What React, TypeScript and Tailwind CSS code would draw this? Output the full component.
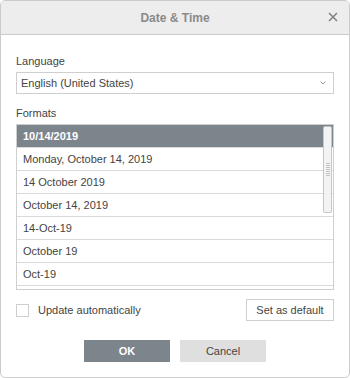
import React, { useState } from 'react';

// only the rows that fit in the visible part of the list
const formats = [
  '10/14/2019',
  'Monday, October 14, 2019',
  '14 October 2019',
  'October 14, 2019',
  '14-Oct-19',
  'October 19',
  'Oct-19',
];

export default function App() {
  const [selected, setSelected] = useState(0);
  const [autoUpdate, setAutoUpdate] = useState(false);

  return (
    <div
      className="w-[350px] h-[378px] bg-white text-[#444] text-[11px]"
      style={{ fontFamily: '"Liberation Sans", Arial, sans-serif' }}
    >
      <div className="h-full border border-[#cbcbcb] rounded-[5px] overflow-hidden flex flex-col">
        {/* Header */}
        <div className="relative h-[34px] shrink-0 bg-[#ededed] border-b border-[#cbcbcb] flex items-center justify-center">
          <span className="text-[12px] font-bold text-[#8a8a8a]">Date &amp; Time</span>
          <button className="absolute right-[11px] top-[11px] w-[10px] h-[10px]">
            <svg width="10" height="10" viewBox="0 0 10 10">
              <path d="M1 1 L9 9 M9 1 L1 9" stroke="#808080" strokeWidth="1.5" />
            </svg>
          </button>
        </div>

        {/* Body */}
        <div className="px-[15px] pt-[19px] flex flex-col">
          <label className="leading-[14px] mb-[4px]">Language</label>
          <div className="h-[22px] border border-[#cfcfcf] flex items-center justify-between pl-[4px] pr-[7px]">
            <span>English (United States)</span>
            <svg width="6" height="4" viewBox="0 0 6 4">
              <path d="M0.5 0.5 L3 3 L5.5 0.5" fill="none" stroke="#9a9a9a" strokeWidth="1" />
            </svg>
          </div>

          <label className="leading-[14px] mt-[12px] mb-[4px]">Formats</label>
          <div className="relative h-[166px] border border-[#cfcfcf] overflow-hidden">
            {formats.map((f, i) => (
              <div
                key={f}
                onClick={() => setSelected(i)}
                className={`h-[23px] border-b border-[#dadada] flex items-center pl-[6px] ${
                  i === selected ? 'bg-[#7d858c] text-white font-bold border-[#7d858c]' : 'bg-white'
                }`}
              >
                {f}
              </div>
            ))}
            <div className="h-[23px] border-b border-[#dadada]" />
            {/* Scrollbar */}
            <div className="absolute right-[1px] top-[1px] w-[9px] h-[87px] rounded-[2px] bg-[#f3f3f3] border border-[#c6c6c6] flex flex-col items-center justify-center gap-[1px]">
              {[0, 1, 2, 3, 4, 5, 6].map((n) => (
                <span key={n} className="block w-[4px] h-[1px] bg-[#c4c4c4]" />
              ))}
            </div>
          </div>

          <div className="mt-[9px] flex items-center justify-between">
            <label className="flex items-center gap-[9px] cursor-pointer" onClick={() => setAutoUpdate(!autoUpdate)}>
              <span className="w-[13px] h-[13px] border border-[#cfcfcf] bg-white flex items-center justify-center">
                {autoUpdate && (
                  <svg width="9" height="7" viewBox="0 0 9 7">
                    <path d="M1 3.5 L3.5 6 L8 1" fill="none" stroke="#444" strokeWidth="1.4" />
                  </svg>
                )}
              </span>
              <span>Update automatically</span>
            </label>
            <button className="w-[88px] h-[22px] border border-[#cfcfcf] bg-white text-[#444]">
              Set as default
            </button>
          </div>

          <div className="mt-[19px] flex justify-center gap-[10px]">
            <button className="w-[86px] h-[22px] bg-[#7d858c] text-white font-bold">OK</button>
            <button className="w-[86px] h-[22px] bg-[#dfdfdf] text-[#444]">Cancel</button>
          </div>
        </div>
      </div>
    </div>
  );
}
